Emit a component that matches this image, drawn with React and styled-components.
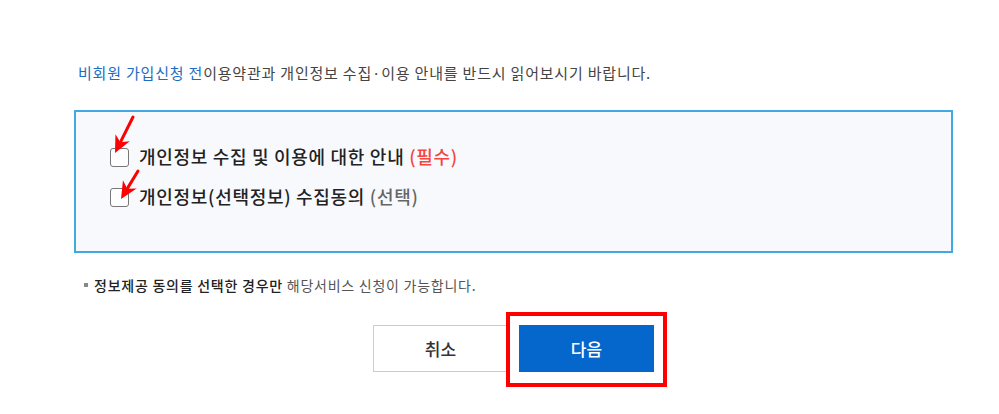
import React from 'react';
import styled, { createGlobalStyle } from 'styled-components';

const GlobalStyle = createGlobalStyle`
  body {
    margin: 0;
    background: #fff;
    font-family: "Noto Sans CJK KR", "Noto Sans", sans-serif;
    color: #333;
  }
`;

const Page = styled.div`
  width: 879px;
  min-height: 414px;
  box-sizing: border-box;
  margin-left: 74px;
  padding-top: 61px;
`;

const Intro = styled.p`
  margin: 0 0 0 4px;
  font-size: 15px;
  letter-spacing: 0.8px;
  line-height: 24px;
  color: #444;

  em {
    font-style: normal;
    color: #1a6dc2;
  }
`;

const AgreeBox = styled.div`
  margin-top: 25px;
  height: 143px;
  box-sizing: border-box;
  border: 2px solid #41a8e1;
  background: #f8f9fd;
  padding: 30px 0 0 34px;
  display: flex;
  flex-direction: column;
  gap: 11px;
`;

const Row = styled.label`
  display: flex;
  align-items: center;
  gap: 10px;
  font-size: 18px;
  letter-spacing: 0.7px;
  font-weight: 500;
  line-height: 29px;
  color: #222;
`;

const Check = styled.span`
  position: relative;
  flex: none;
  width: 19px;
  height: 19px;
  box-sizing: border-box;
  border: 1px solid #777;
  border-radius: 3px;
  background: #fff;
  margin-top: 2px;
`;

const Tag = styled.span`
  color: ${p => p.$required ? '#f2463f' : '#666'};
`;

const Arrow = styled.svg`
  position: absolute;
  left: 0;
  top: 0;
  overflow: visible;
`;

const Note = styled.p`
  margin: 22px 0 0 10px;
  display: flex;
  align-items: center;
  gap: 6px;
  font-size: 14px;
  letter-spacing: 0.75px;
  line-height: 20px;
  color: #555;

  &::before {
    content: '';
    width: 4px;
    height: 4px;
    background: #888;
  }

  strong {
    font-weight: 500;
    color: #222;
  }
`;

const Buttons = styled.div`
  margin-top: 30px;
  display: flex;
  justify-content: center;
  gap: 11px;
`;

const Marked = styled.span`
  position: relative;
  display: block;
`;

const Button = styled.button`
  display: block;
  width: 135px;
  height: 47px;
  font-family: inherit;
  font-size: 17px;
  font-weight: 500;
  border: 1px solid ${p => p.$primary ? '#0566cc' : '#ccc'};
  background: ${p => p.$primary ? '#0566cc' : '#fff'};
  color: ${p => p.$primary ? '#fff' : '#333'};
  cursor: pointer;
`;

const Highlight = styled.span`
  position: absolute;
  left: -13px;
  right: -13px;
  top: -13px;
  bottom: -15px;
  border: 4px solid #f00;
  pointer-events: none;
`;

// red annotation arrow, drawn from tail to tip relative to the checkbox corner
const RedArrow = ({ tail, tip }) => {
  const [x1, y1] = tail;
  const [x2, y2] = tip;
  const len = Math.hypot(x2 - x1, y2 - y1);
  const ux = (x2 - x1) / len;
  const uy = (y2 - y1) / len;
  const bx = x2 - ux * 17;
  const by = y2 - uy * 17;
  const px = -uy * 8;
  const py = ux * 8;
  return (
    <Arrow width="1" height="1">
      <line x1={x1} y1={y1} x2={bx + ux * 4} y2={by + uy * 4} stroke="#f00" strokeWidth="3" strokeLinecap="round" />
      <polygon points={`${x2},${y2} ${bx + px},${by + py} ${bx + ux * 5},${by + uy * 5} ${bx - px},${by - py}`} fill="#f00" />
    </Arrow>
  );
};

export default function App() {
  return (
    <Page>
      <GlobalStyle />
      <Intro>
        <em>비회원 가입신청 전</em>이용약관과 개인정보 수집·이용 안내를 반드시 읽어보시기 바랍니다.
      </Intro>
      <AgreeBox>
        <Row>
          <Check>
            <RedArrow tail={[22, -32]} tip={[4, 4]} />
          </Check>
          <span>개인정보 수집 및 이용에 대한 안내 <Tag $required>(필수)</Tag></span>
        </Row>
        <Row>
          <Check>
            <RedArrow tail={[27, -18]} tip={[10, 10]} />
          </Check>
          <span>개인정보(선택정보) 수집동의 <Tag>(선택)</Tag></span>
        </Row>
      </AgreeBox>
      <Note>
        <span><strong>정보제공 동의를 선택한 경우만</strong> 해당서비스 신청이 가능합니다.</span>
      </Note>
      <Buttons>
        <Button>취소</Button>
        <Marked>
          <Button $primary>다음</Button>
          <Highlight />
        </Marked>
      </Buttons>
    </Page>
  );
}
